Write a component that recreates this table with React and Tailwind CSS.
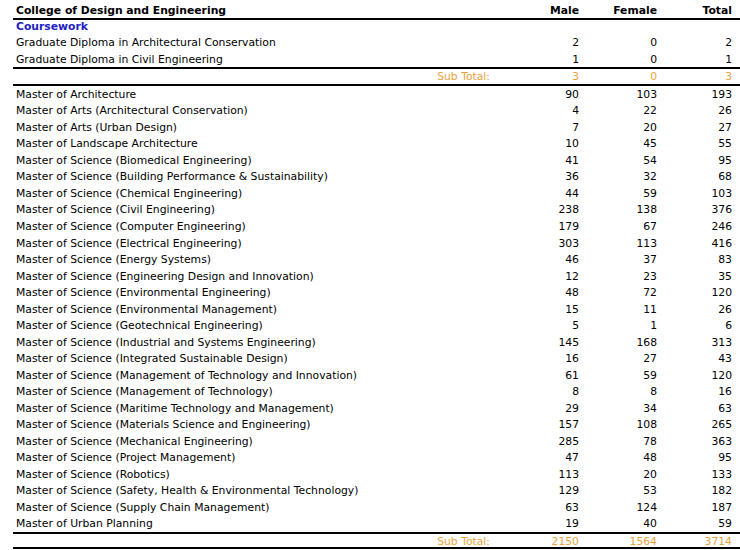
import React from 'react';

const diplomas = [
  ['Graduate Diploma in Architectural Conservation', 2, 0, 2],
  ['Graduate Diploma in Civil Engineering', 1, 0, 1],
];

const masters = [
  ['Master of Architecture', 90, 103, 193],
  ['Master of Arts (Architectural Conservation)', 4, 22, 26],
  ['Master of Arts (Urban Design)', 7, 20, 27],
  ['Master of Landscape Architecture', 10, 45, 55],
  ['Master of Science (Biomedical Engineering)', 41, 54, 95],
  ['Master of Science (Building Performance & Sustainability)', 36, 32, 68],
  ['Master of Science (Chemical Engineering)', 44, 59, 103],
  ['Master of Science (Civil Engineering)', 238, 138, 376],
  ['Master of Science (Computer Engineering)', 179, 67, 246],
  ['Master of Science (Electrical Engineering)', 303, 113, 416],
  ['Master of Science (Energy Systems)', 46, 37, 83],
  ['Master of Science (Engineering Design and Innovation)', 12, 23, 35],
  ['Master of Science (Environmental Engineering)', 48, 72, 120],
  ['Master of Science (Environmental Management)', 15, 11, 26],
  ['Master of Science (Geotechnical Engineering)', 5, 1, 6],
  ['Master of Science (Industrial and Systems Engineering)', 145, 168, 313],
  ['Master of Science (Integrated Sustainable Design)', 16, 27, 43],
  ['Master of Science (Management of Technology and Innovation)', 61, 59, 120],
  ['Master of Science (Management of Technology)', 8, 8, 16],
  ['Master of Science (Maritime Technology and Management)', 29, 34, 63],
  ['Master of Science (Materials Science and Engineering)', 157, 108, 265],
  ['Master of Science (Mechanical Engineering)', 285, 78, 363],
  ['Master of Science (Project Management)', 47, 48, 95],
  ['Master of Science (Robotics)', 113, 20, 133],
  ['Master of Science (Safety, Health & Environmental Technology)', 129, 53, 182],
  ['Master of Science (Supply Chain Management)', 63, 124, 187],
  ['Master of Urban Planning', 19, 40, 59],
];

const Row = ({ cells, height, className = '' }) => (
  <div className={`flex items-center ${height} ${className}`}>
    <div className="flex-1 pl-[3px] whitespace-nowrap">{cells[0]}</div>
    <div className="w-[77px] pr-[5px] text-right">{cells[1]}</div>
    <div className="w-[77px] pr-[4px] text-right">{cells[2]}</div>
    <div className="w-[79px] pr-[8px] text-right">{cells[3]}</div>
  </div>
);

const SubTotal = ({ values, height }) => (
  <div className={`flex items-center text-[#e9a23b] ${height}`}>
    <div className="flex-1 pr-[17px] text-right">Sub Total:</div>
    <div className="w-[77px] pr-[5px] text-right">{values[0]}</div>
    <div className="w-[77px] pr-[4px] text-right">{values[1]}</div>
    <div className="w-[79px] pr-[8px] text-right">{values[2]}</div>
  </div>
);

export default function App() {
  return (
    <div className="w-[740px] h-[550px] bg-white overflow-hidden pl-[13px] text-[10.8px] leading-none text-black font-['DejaVu_Sans',Verdana,sans-serif]">
      <div className="border-b-2 border-black font-bold">
        <Row cells={['College of Design and Engineering', 'Male', 'Female', 'Total']} height="h-[18px] pt-[4px]" />
      </div>
      <div className="flex items-center h-[14px] pl-[3px] font-bold text-[#2222c4]">Coursework</div>
      <div className="border-b-2 border-black">
        <Row cells={diplomas[0]} height="h-[17px] pt-[1px]" />
        <Row cells={diplomas[1]} height="h-[16px] pt-[2px]" />
      </div>
      <div className="border-b-2 border-black">
        <SubTotal values={[3, 0, 3]} height="h-[15px] pt-[1px]" />
      </div>
      <div className="border-b-2 border-black">
        {masters.map((m) => (
          <Row key={m[0]} cells={m} height="h-[16.52px] pt-[2px]" />
        ))}
      </div>
      <div className="border-b-2 border-black">
        <SubTotal values={[2150, 1564, 3714]} height="h-[13px] pt-[3px]" />
      </div>
    </div>
  );
}
